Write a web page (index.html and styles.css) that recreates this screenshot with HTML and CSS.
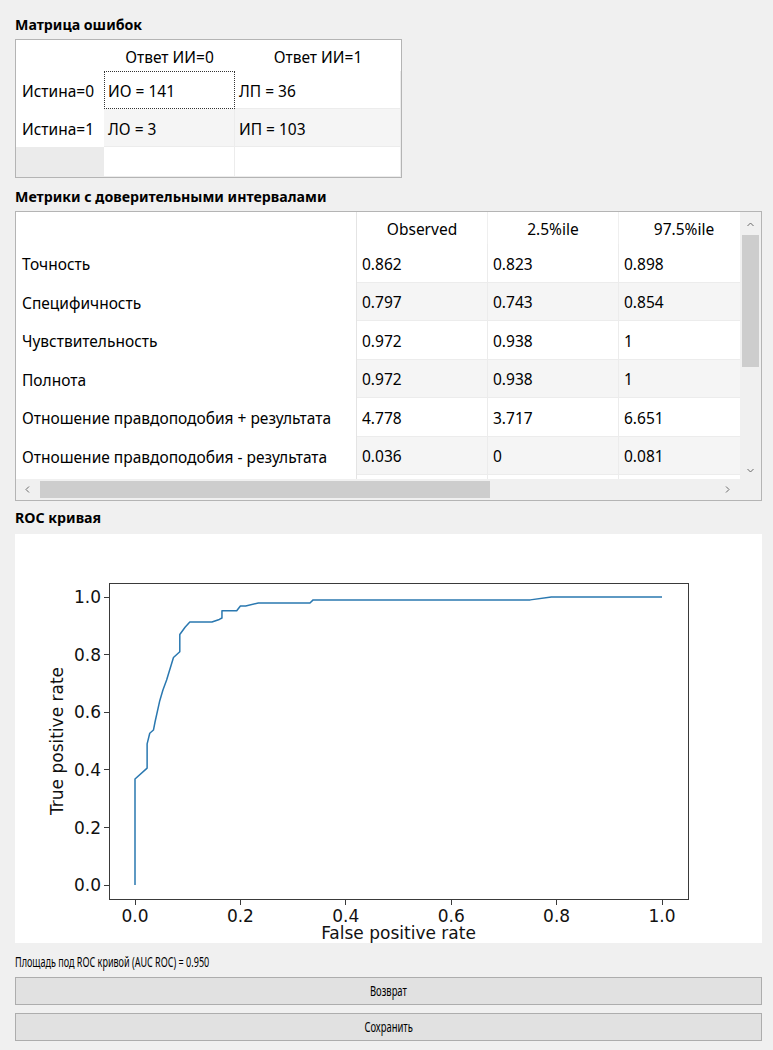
FILE: index.html
```html
<!DOCTYPE html>
<html lang="ru">
<head>
<meta charset="utf-8">
<title>Результаты</title>
<link rel="stylesheet" href="styles.css">
</head>
<body>
<div class="app">
  <div class="title t1">Матрица ошибок</div>
  <div class="box cm">
    <div class="cmgrid">
      <div class="corner"></div>
      <div class="hh">Ответ ИИ=0</div>
      <div class="hh">Ответ ИИ=1</div>
      <div class="vh">Истина=0</div>
      <div class="c focus">ИО = 141</div>
      <div class="c">ЛП = 36</div>
      <div class="vh">Истина=1</div>
      <div class="c alt">ЛО = 3</div>
      <div class="c alt">ИП = 103</div>
      <div class="vh empty"></div>
      <div class="c"></div>
      <div class="c"></div>
    </div>
  </div>

  <div class="title t2">Метрики с доверительными интервалами</div>
  <div class="box metrics">
    <div class="viewport">
      <div class="mgrid">
        <div class="corner"></div>
        <div class="hh">Observed</div>
        <div class="hh">2.5%ile</div>
        <div class="hh">97.5%ile</div>

        <div class="vh">Точность</div>
        <div class="c">0.862</div><div class="c">0.823</div><div class="c">0.898</div>

        <div class="vh">Специфичность</div>
        <div class="c alt">0.797</div><div class="c alt">0.743</div><div class="c alt">0.854</div>

        <div class="vh">Чувствительность</div>
        <div class="c">0.972</div><div class="c">0.938</div><div class="c">1</div>

        <div class="vh">Полнота</div>
        <div class="c alt">0.972</div><div class="c alt">0.938</div><div class="c alt">1</div>

        <div class="vh">Отношение правдоподобия + результата</div>
        <div class="c">4.778</div><div class="c">3.717</div><div class="c">6.651</div>

        <div class="vh">Отношение правдоподобия - результата</div>
        <div class="c alt">0.036</div><div class="c alt">0</div><div class="c alt">0.081</div>

        <div class="vh"></div>
        <div class="c"></div><div class="c"></div><div class="c"></div>
      </div>
    </div>
    <div class="vscroll">
      <svg class="arrow" width="9" height="9" viewBox="0 0 9 9"><path d="M1.5 6 L4.5 3 L7.5 6" fill="none" stroke="#6b6b6b" stroke-width="1"/></svg>
      <div class="vtrack"><div class="vthumb"></div></div>
      <svg class="arrow" width="9" height="9" viewBox="0 0 9 9"><path d="M1.5 3 L4.5 6 L7.5 3" fill="none" stroke="#6b6b6b" stroke-width="1"/></svg>
    </div>
    <div class="hscroll">
      <svg class="arrow" width="9" height="9" viewBox="0 0 9 9"><path d="M6 1.5 L3 4.5 L6 7.5" fill="none" stroke="#6b6b6b" stroke-width="1"/></svg>
      <div class="htrack"><div class="hthumb"></div></div>
      <svg class="arrow" width="9" height="9" viewBox="0 0 9 9"><path d="M3 1.5 L6 4.5 L3 7.5" fill="none" stroke="#6b6b6b" stroke-width="1"/></svg>
    </div>
    <div class="scorner"></div>
  </div>

  <div class="title t3">ROC кривая</div>
  <div class="canvas">
    <svg class="plot" width="747" height="409" viewBox="0 0 747 409">
      <rect x="94.5" y="49.5" width="579" height="316" fill="none" stroke="#3a3a3a" stroke-width="1"/>
      <g stroke="#3a3a3a" stroke-width="1">
        <line x1="89" y1="351.5" x2="94" y2="351.5"/>
        <line x1="89" y1="293.5" x2="94" y2="293.5"/>
        <line x1="89" y1="235.5" x2="94" y2="235.5"/>
        <line x1="89" y1="178.5" x2="94" y2="178.5"/>
        <line x1="89" y1="120.5" x2="94" y2="120.5"/>
        <line x1="89" y1="63.5" x2="94" y2="63.5"/>
        <line x1="120.5" y1="366" x2="120.5" y2="371"/>
        <line x1="225.5" y1="366" x2="225.5" y2="371"/>
        <line x1="330.5" y1="366" x2="330.5" y2="371"/>
        <line x1="436.5" y1="366" x2="436.5" y2="371"/>
        <line x1="541.5" y1="366" x2="541.5" y2="371"/>
        <line x1="647.5" y1="366" x2="647.5" y2="371"/>
      </g>
      <g class="ticklabel" text-anchor="end">
        <text x="86" y="357">0.0</text>
        <text x="86" y="299.5">0.2</text>
        <text x="86" y="242">0.4</text>
        <text x="86" y="184">0.6</text>
        <text x="86" y="126.5">0.8</text>
        <text x="86" y="69">1.0</text>
      </g>
      <g class="ticklabel" text-anchor="middle">
        <text x="120" y="388">0.0</text>
        <text x="225.4" y="388">0.2</text>
        <text x="330.8" y="388">0.4</text>
        <text x="436.2" y="388">0.6</text>
        <text x="541.6" y="388">0.8</text>
        <text x="647" y="388">1.0</text>
      </g>
      <text class="axlabel" x="383.5" y="404.5" text-anchor="middle">False positive rate</text>
      <text class="axlabel" transform="translate(48 207) rotate(-90)" text-anchor="middle">True positive rate</text>
      <g transform="translate(120 351) scale(527 -288)">
        <path d="M0 0 L0 0.368 L0.023 0.406 L0.023 0.49 L0.028 0.527 L0.035 0.538 L0.038 0.566 L0.047 0.64 L0.053 0.677 L0.06 0.712 L0.073 0.79 L0.085 0.81 L0.085 0.87 L0.095 0.895 L0.104 0.913 L0.146 0.913 L0.16 0.922 L0.165 0.927 L0.165 0.952 L0.193 0.952 L0.2 0.969 L0.21 0.969 L0.234 0.979 L0.332 0.979 L0.338 0.99 L0.75 0.99 L0.79 1 L1 1" fill="none" stroke="#2a78b0" stroke-width="1.5" vector-effect="non-scaling-stroke" stroke-linejoin="round"/>
      </g>
    </svg>
  </div>

  <div class="auc"><span class="narrow">Площадь под ROC кривой (AUC ROC) = 0.950</span></div>
  <button class="btn b1"><span class="narrow-c">Возврат</span></button>
  <button class="btn b2"><span class="narrow-c">Сохранить</span></button>
</div>
</body>
</html>
```

FILE: styles.css
```css
* { box-sizing: border-box; }

html, body {
  margin: 0;
  padding: 0;
  background: #f0f0f0;
}

body {
  font-family: "Noto Sans", "Open Sans", "DejaVu Sans", sans-serif;
  color: #000;
  width: 773px;
  height: 1050px;
  overflow: hidden;
}

.app {
  display: flex;
  flex-direction: column;
  padding: 15px 11px 0 15px;
}

.title {
  font-weight: 700;
  font-size: 14.2px;
  line-height: 20px;
  height: 20px;
  white-space: nowrap;
}
.t1 { margin-bottom: 4px; }
.t2 { margin-top: 9px; margin-bottom: 4px; }
.t3 { margin-top: 7px; margin-bottom: 6px; }

.box {
  border: 1px solid #b4b4b4;
  background: #fff;
}

/* confusion matrix */
.cm {
  width: 387px;
  height: 139px;
  overflow: hidden;
}
.cmgrid {
  display: grid;
  grid-template-columns: 88px 131px 166px;
  grid-template-rows: 31px 38px 38px 30px;
  font-size: 15.5px;
}

.corner { background: #fff; }

.hh {
  display: flex;
  align-items: center;
  justify-content: center;
  background: #fff;
  white-space: nowrap;
  padding-top: 2px;
}

.vh {
  display: flex;
  align-items: center;
  padding-left: 6px;
  padding-top: 2px;
  background: #fff;
  white-space: nowrap;
}
.vh.empty { background: #ebebeb; }

.c {
  display: flex;
  align-items: center;
  padding-left: 4px;
  padding-top: 2px;
  background: #fff;
  border-right: 1px solid #ececec;
  border-bottom: 1px solid #ececec;
  white-space: nowrap;
}
.c.alt { background: #f5f5f5; }
.cmgrid .c:nth-child(3n+1) { border-left: 1px solid #ececec; }

.c.focus {
  border: 1px dotted #333;
  padding-left: 3px;
}

/* metrics table */
.metrics {
  width: 747px;
  height: 290px;
  display: grid;
  grid-template-columns: 724px 21px;
  grid-template-rows: 267px 21px;
}
.viewport {
  overflow: hidden;
  grid-column: 1;
  grid-row: 1;
}
.mgrid {
  display: grid;
  grid-template-columns: 341px 131px 131px 131px;
  grid-template-rows: 32px repeat(7, 38.5px);
  font-size: 15.5px;
}
.mgrid .hh { border-right: 1px solid #efefef; }
.mgrid .c { padding-left: 5px; }
.mgrid .vh { border-right: 1px solid #e4e4e4; }
.mgrid .corner { border-right: 1px solid #e4e4e4; }

.vscroll {
  grid-column: 2;
  grid-row: 1;
  background: #f0f0f0;
  display: flex;
  flex-direction: column;
  align-items: center;
  padding: 8px 0 4px;
}
.vtrack {
  flex: 1;
  width: 100%;
  padding: 6px 2px 0 0;
}
.vthumb {
  width: 17px;
  margin-left: 2px;
  height: 132px;
  background: #cdcdcd;
}

.hscroll {
  grid-column: 1;
  grid-row: 2;
  background: #f0f0f0;
  display: flex;
  align-items: center;
  padding: 0 8px 0 7px;
}
.htrack {
  flex: 1;
  height: 100%;
  padding: 2px 0 2px 8px;
}
.hthumb {
  height: 100%;
  width: 450px;
  background: #cdcdcd;
}
.scorner {
  grid-column: 2;
  grid-row: 2;
  background: #f0f0f0;
}
.arrow { display: block; flex: none; }

/* ROC plot */
.canvas {
  width: 747px;
  height: 409px;
  background: #fff;
  overflow: hidden;
}
.plot { display: block; }
.ticklabel text {
  font-family: "DejaVu Sans", sans-serif;
  font-size: 17px;
  fill: #111;
}
.axlabel {
  font-family: "DejaVu Sans", sans-serif;
  font-size: 17px;
  fill: #111;
}

/* bottom */
.auc {
  margin-top: 9px;
  height: 20px;
  line-height: 20px;
  font-size: 13.5px;
  white-space: nowrap;
}
.narrow {
  display: inline-block;
  transform: scaleX(0.67);
  transform-origin: left center;
}

.btn {
  display: flex;
  align-items: center;
  justify-content: center;
  width: 747px;
  height: 28px;
  margin: 0;
  padding: 0;
  border: 1px solid #adadad;
  background: #e1e1e1;
  font-family: "Noto Sans", "Open Sans", sans-serif;
  font-size: 13.5px;
  color: #000;
}
.b1 { margin-top: 5px; }
.b2 { margin-top: 8px; }
.narrow-c {
  display: inline-block;
  transform: scaleX(0.7);
  transform-origin: center center;
}
```
